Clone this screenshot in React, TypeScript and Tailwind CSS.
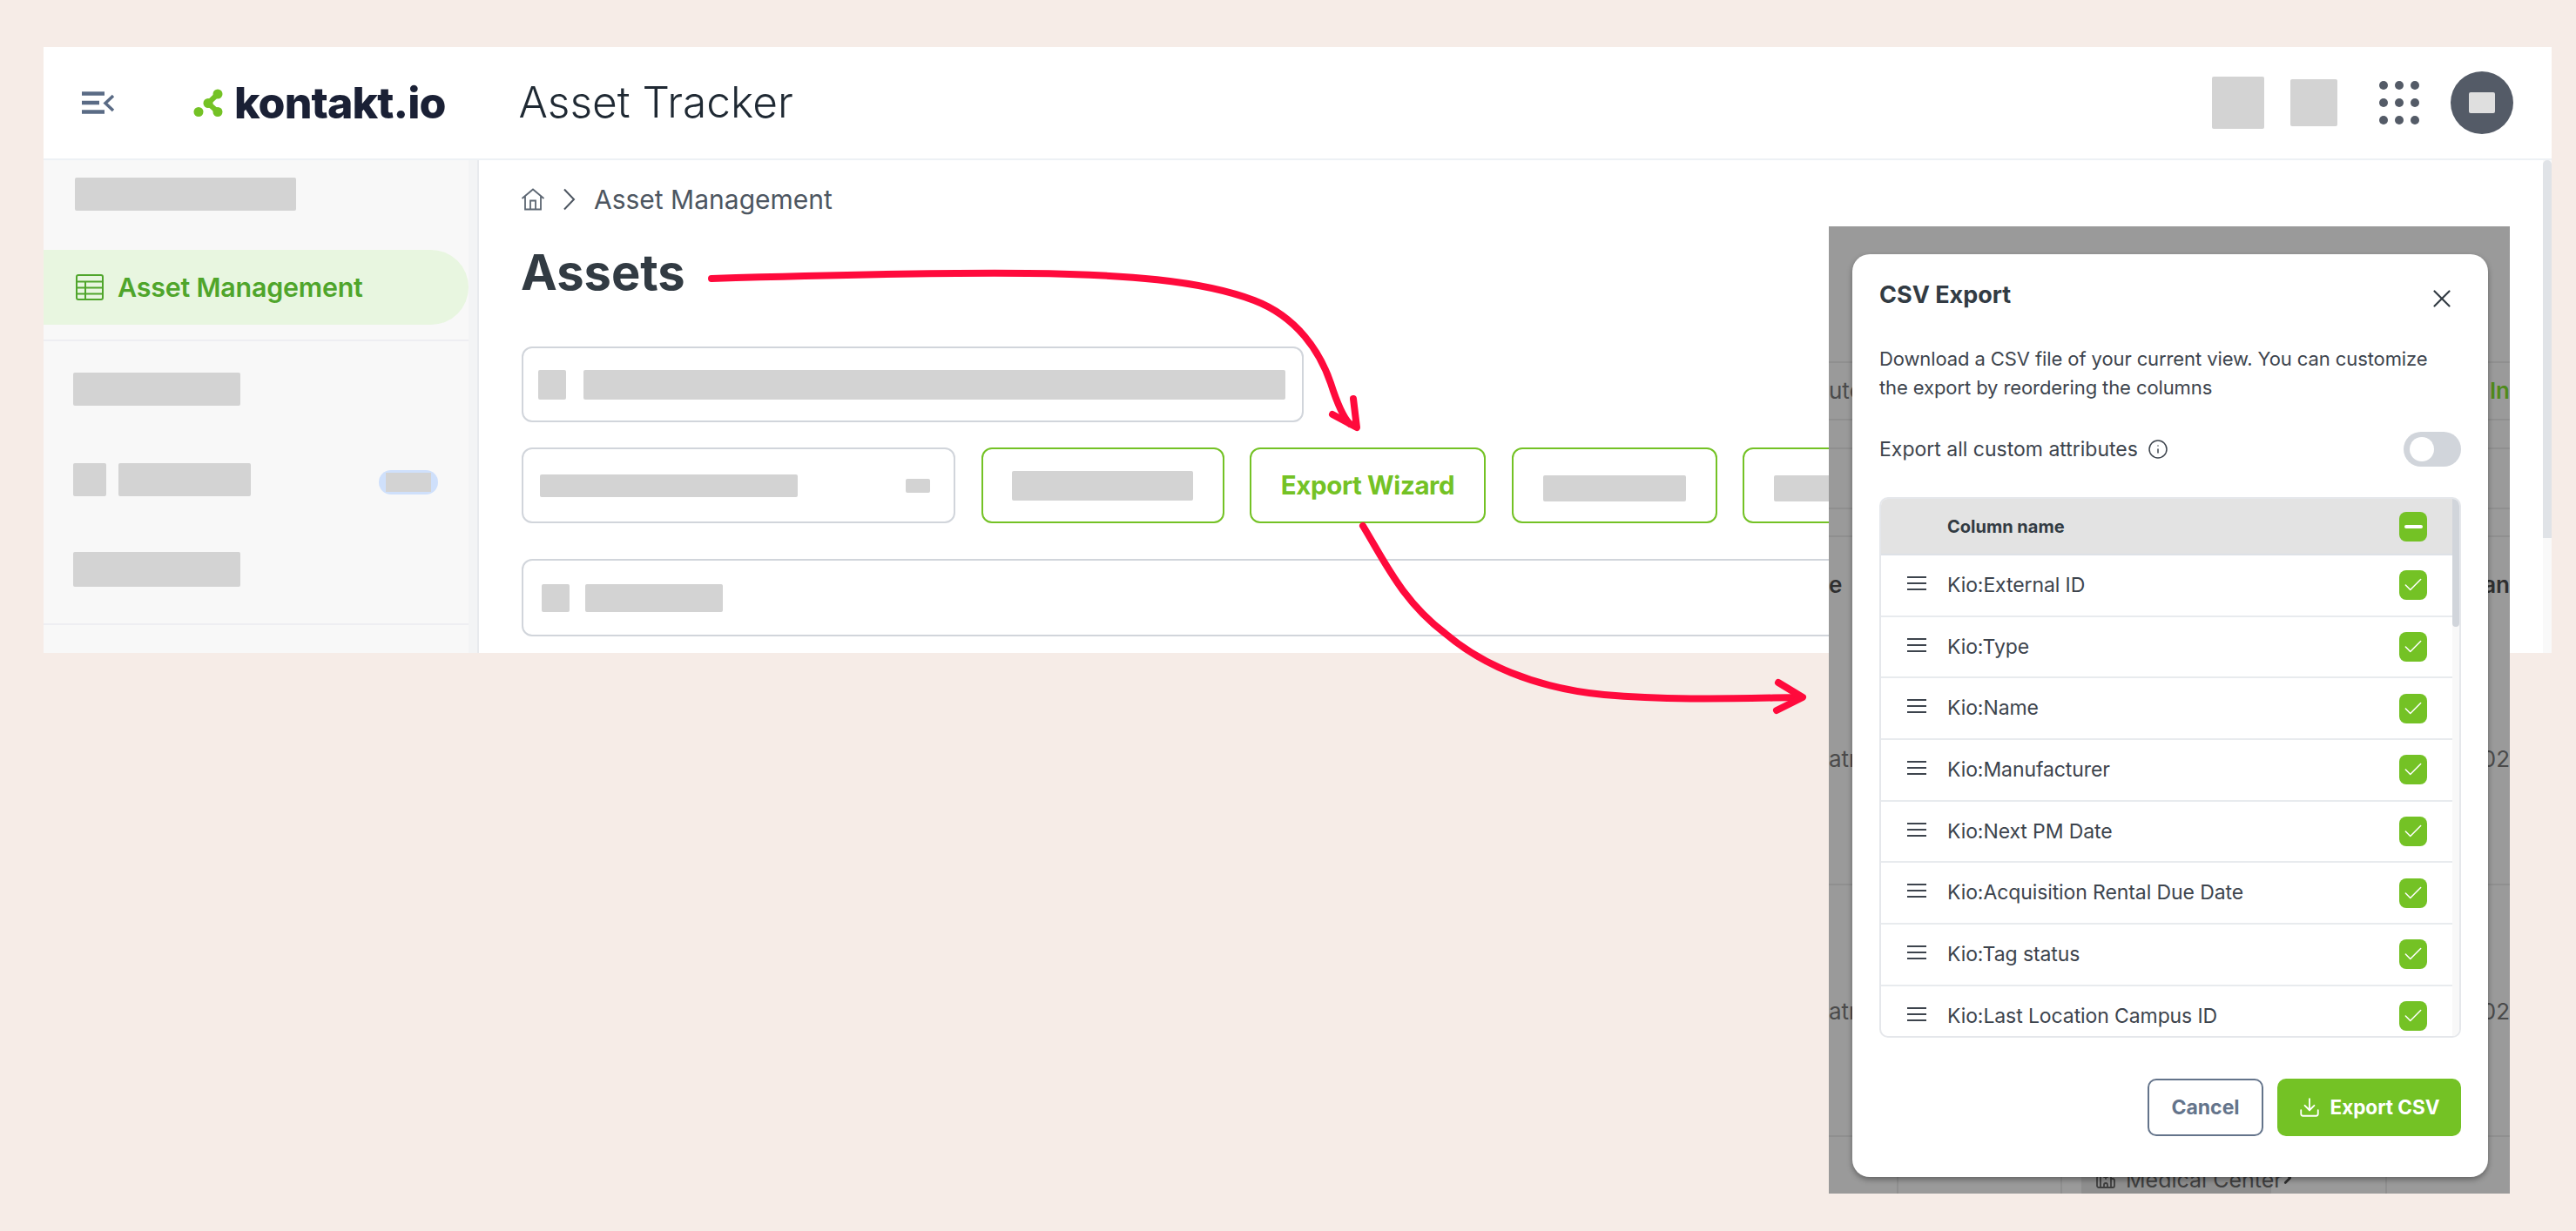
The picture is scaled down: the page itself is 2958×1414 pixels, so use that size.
import { ChevronRight, Hospital, Info, X, Check, Download } from "lucide-react";

const COLUMNS = [
  "Kio:External ID",
  "Kio:Type",
  "Kio:Name",
  "Kio:Manufacturer",
  "Kio:Next PM Date",
  "Kio:Acquisition Rental Due Date",
  "Kio:Tag status",
  "Kio:Last Location Campus ID",
];

function Gray({ className }: { className: string }) {
  return <div className={`rounded-[2px] bg-[#d3d3d3] shrink-0 ${className}`} />;
}

function MenuIcon() {
  return (
    <svg width="40" height="28" viewBox="0 0 40 28" className="shrink-0">
      <path d="M1 3.5h26M1 14h20M1 24.5h26" stroke="#5a6b85" strokeWidth="4.5" fill="none" />
      <path d="M37 6l-9 8.5 9 8.5" stroke="#5a6b85" strokeWidth="3.5" fill="none" />
    </svg>
  );
}

function Logo() {
  return (
    <div className="flex items-center">
      <svg width="36" height="36" viewBox="0 0 36 36" className="shrink-0">
        <path d="M17 18.5L28 8M17 18.5L28 28.5" stroke="#74c225" strokeWidth="6" fill="none" />
        <circle cx="6" cy="28.5" r="5.5" fill="#74c225" />
        <circle cx="17" cy="18.5" r="5.5" fill="#74c225" />
        <circle cx="28" cy="8" r="5.5" fill="#74c225" />
        <circle cx="28" cy="28.5" r="5.5" fill="#74c225" />
      </svg>
      <span className="ml-[11px] text-[50px] leading-none font-extrabold text-[#1a2035] tracking-[-0.9px]">
        kontakt.io
      </span>
    </div>
  );
}

function Header() {
  return (
    <header className="h-[130px] shrink-0 flex items-center bg-white border-b-2 border-[#edf1f5] pl-[43px]">
      <MenuIcon />
      <div className="ml-[89px]">
        <Logo />
      </div>
      <h1 className="ml-[84px] text-[49.6px] leading-none font-light text-[#1f2933]">Asset Tracker</h1>
      <div className="ml-auto flex items-center pr-[44px]">
        <Gray className="w-[60px] h-[60px]" />
        <Gray className="ml-[30px] w-[54px] h-[54px]" />
        <svg width="46" height="50" viewBox="0 0 46 50" className="ml-[48px] shrink-0">
          {[5, 25, 45].map((cy) =>
            [5, 23, 41].map((cx) => <circle key={`${cx}-${cy}`} cx={cx} cy={cy} r="5" fill="#545b67" />),
          )}
        </svg>
        <div className="ml-[36px] w-[72px] h-[72px] rounded-full bg-[#545b67] flex items-center justify-center">
          <div className="w-[30px] h-[24px] rounded-[2px] bg-[#dfdfdf]" />
        </div>
      </div>
    </header>
  );
}

function Sidebar() {
  return (
    <aside className="w-[500px] shrink-0 flex bg-[#f3f4f5] border-r-2 border-[#e8eaed]">
      <div className="w-[488px] bg-[#f8f8f8] pt-[20px]">
        <Gray className="ml-[36px] w-[254px] h-[38px]" />
        <div className="mt-[45px] h-[86px] rounded-r-[43px] bg-[#e8f6e0] flex items-center pl-[37px]">
          <svg width="32" height="30" viewBox="0 0 32 30" fill="none" stroke="#4fa52b" strokeWidth="2">
            <rect x="1" y="1" width="30" height="28" rx="2" />
            <path d="M1 8.5h30M1 15.5h30M1 22.5h30M11 8.5V29" />
          </svg>
          <span className="ml-[16px] text-[30.4px] font-semibold leading-none text-[#4fa52b] tracking-[-0.2px]">
            Asset Management
          </span>
        </div>
        <div className="mt-[17px] h-[2px] bg-[#eeeef2]" />
        <Gray className="mt-[36px] ml-[34px] w-[192px] h-[38px]" />
        <div className="mt-[66px] pl-[34px] flex items-center">
          <Gray className="w-[38px] h-[38px]" />
          <Gray className="ml-[14px] w-[152px] h-[38px]" />
          <div className="ml-[147px] mt-[6px] w-[68px] h-[28px] rounded-[14px] bg-[#cfe0fb] flex items-center justify-center">
            <div className="w-[52px] h-[22px] bg-[#d3d3d3]" />
          </div>
        </div>
        <Gray className="mt-[64px] ml-[34px] w-[192px] h-[40px]" />
        <div className="mt-[42px] h-[2px] bg-[#eeeef2]" />
      </div>
    </aside>
  );
}

function OutlineBox({ className, children }: { className: string; children?: React.ReactNode }) {
  return (
    <div className={`shrink-0 h-[87px] rounded-[12px] border-2 flex items-center ${className}`}>{children}</div>
  );
}

function Content() {
  return (
    <main className="flex-1 min-w-0 flex bg-white">
      <div className="flex-1 min-w-0 overflow-hidden pl-[49px] pt-[30px]">
        <nav className="h-[30px] -ml-[1px] flex items-center text-[#4d5661]">
          <svg width="28" height="26" viewBox="0 0 28 26" fill="none" stroke="#5c6672" strokeWidth="1.8" className="shrink-0">
            <path d="M1.5 12L14 1.5 26.5 12M5 9.5V24.5H23V9.5M11 24.5V14.5H17V24.5" />
          </svg>
          <svg width="15" height="26" viewBox="0 0 15 26" fill="none" stroke="#4d5661" strokeWidth="2" className="ml-[20px] shrink-0">
            <path d="M2 1.5L13 13 2 24.5" />
          </svg>
          <span className="ml-[21px] text-[30px] leading-none">Asset Management</span>
        </nav>
        <h2 className="mt-[44px] h-[50px] -ml-[1px] text-[56px] leading-[50px] font-bold text-[#323b43]">Assets</h2>
        <div className="mt-[60px]">
          <OutlineBox className="w-[898px] border-[#d1d5db] pl-[17px]">
            <Gray className="w-[32px] h-[34px]" />
            <Gray className="ml-[20px] w-[806px] h-[34px]" />
          </OutlineBox>
        </div>
        <div className="mt-[29px] flex gap-[29.5px] w-[1700px]">
          <OutlineBox className="w-[498px] border-[#d1d5db] pl-[19px]">
            <Gray className="w-[296px] h-[26px]" />
            <Gray className="ml-[124px] w-[28px] h-[16px]" />
          </OutlineBox>
          <OutlineBox className="w-[279px] border-[#74c225] justify-center">
            <Gray className="w-[208px] h-[34px]" />
          </OutlineBox>
          <OutlineBox className="w-[271px] border-[#74c225] justify-center">
            <span className="text-[29.5px] leading-none font-bold text-[#74c225] tracking-[-0.4px]">
              Export Wizard
            </span>
          </OutlineBox>
          <OutlineBox className="w-[236px] border-[#74c225] justify-center">
            <Gray className="w-[164px] h-[30px] mt-[6px]" />
          </OutlineBox>
          <OutlineBox className="w-[236px] border-[#74c225] justify-center">
            <Gray className="w-[164px] h-[30px] mt-[6px]" />
          </OutlineBox>
        </div>
        <div className="mt-[41px] w-[1700px] h-[89px] rounded-[12px] border-2 border-[#d1d5db] flex items-center pl-[21px]">
          <Gray className="w-[32px] h-[32px]" />
          <Gray className="ml-[18px] w-[158px] h-[32px]" />
        </div>
      </div>
      <div className="w-[10px] shrink-0 bg-[#f9f9f9]">
        <div className="h-[434px] rounded-t-[5px] bg-[#e0e3e7]" />
      </div>
    </main>
  );
}

function Backdrop() {
  return (
    <div className="absolute inset-0 flex flex-col overflow-hidden text-[26px] leading-none text-[#4a4a4a]">
      <div className="h-[157px] shrink-0 border-b-2 border-[#8f8f8f]" />
      <div className="h-[66px] shrink-0 flex items-center justify-between border-b-2 border-[#8f8f8f]">
        <span>ute</span>
        <span className="font-semibold text-[#4f8a1a]">In</span>
      </div>
      <div className="h-[33px] shrink-0 border-b-2 border-[#8f8f8f]" />
      <div className="h-[69px] shrink-0 border-b-2 border-[#8f8f8f]" />
      <div className="h-[32px] shrink-0 border-b-2 border-[#8f8f8f]" />
      <div className="h-[400px] shrink-0 border-b-2 border-[#8f8f8f]">
        <div className="mt-[42px] flex justify-between font-semibold text-[#2f2f2f]">
          <span className="whitespace-pre">e  ↑</span>
          <span>an</span>
        </div>
        <div className="mt-[174px] flex justify-between">
          <span>atri</span>
          <span>202</span>
        </div>
      </div>
      <div className="h-[289px] shrink-0 border-b-2 border-[#8f8f8f]">
        <div className="mt-[132px] flex justify-between">
          <span>atri</span>
          <span>202</span>
        </div>
      </div>
      <div className="flex-1 min-h-0 flex">
        <div className="w-[80px] shrink-0 border-r-2 border-[#8f8f8f]" />
        <div className="w-[188px] shrink-0 border-r-2 border-[#8f8f8f]" />
        <div className="w-[373px] shrink-0 border-r-2 border-[#8f8f8f] pl-[22px] flex items-start">
          <div className="mt-[24px] h-[60px] w-[218px] rounded-[22px] bg-[#8e8e8e] flex items-start pl-[16px] pt-[13px] gap-[11px] text-[#3f3f3f]">
            <Hospital size={24} strokeWidth={1.8} className="shrink-0" />
            <span className="whitespace-nowrap text-[25px]">Medical Center</span>
          </div>
          <ChevronRight size={22} strokeWidth={3} className="ml-[8px] mt-[36px] text-[#2f2f2f] shrink-0" />
        </div>
      </div>
    </div>
  );
}

function CheckBox({ dash }: { dash?: boolean }) {
  return (
    <div className="w-[32px] h-[34px] rounded-[8px] bg-[#74c225] flex items-center justify-center shrink-0">
      {dash ? (
        <div className="w-[21px] h-[4px] rounded-[2px] bg-white" />
      ) : (
        <Check size={26} strokeWidth={1.4} className="text-white" />
      )}
    </div>
  );
}

function ColumnTable() {
  return (
    <div className="h-[621px] rounded-[10px] border-2 border-[#e5e7eb] overflow-hidden flex">
      <div className="flex-1 min-w-0">
        <div className="h-[65px] bg-[#e3e3e3] flex items-center pl-[76px] pr-[29px] justify-between border-b-2 border-[#dde1e6]">
          <span className="text-[20px] font-bold text-[#323b43] leading-none">Column name</span>
          <CheckBox dash />
        </div>
        {COLUMNS.map((name) => (
          <div key={name} className="h-[70.7px] flex items-center border-b-2 border-[#e8ebee] pl-[30px] pr-[29px]">
            <div className="w-[22px] h-[16px] -mt-[5px] flex flex-col justify-between shrink-0">
              <div className="h-[2px] bg-[#3d444d]" />
              <div className="h-[2px] bg-[#3d444d]" />
              <div className="h-[2px] bg-[#3d444d]" />
            </div>
            <span className="ml-[24px] text-[23px] leading-none text-[#3d444d] whitespace-nowrap tracking-[-0.1px]">{name}</span>
            <div className="ml-auto">
              <CheckBox />
            </div>
          </div>
        ))}
      </div>
      <div className="w-[8px] shrink-0 bg-[#f8f8f8]">
        <div className="h-[147px] rounded-b-[4px] bg-[#d1d5db]" />
      </div>
    </div>
  );
}

function ExportModal() {
  return (
    <div className="absolute left-[2100px] top-[260px] w-[782px] h-[1111px] bg-[#9a9a9a]">
      <Backdrop />
      <div className="absolute left-[27px] top-[32px] w-[730px] h-[1060px] rounded-[20px] bg-white shadow-[0_3px_6px_rgba(0,0,0,0.35)] px-[31px] pt-[23px]">
        <div className="h-[46px] flex items-center justify-between">
          <h3 className="text-[27px] font-bold leading-none text-[#323b43]">CSV Export</h3>
          <X size={34} strokeWidth={1.5} className="mr-[5px] mt-[10px] text-[#323b43]" />
        </div>
        <p className="mt-[35px] w-[660px] text-[22px] leading-[33px] tracking-[-0.1px] text-[#3d444d]">
          Download a CSV file of your current view. You can customize the export by reordering the columns
        </p>
        <div className="mt-[34px] h-[40px] flex items-center">
          <span className="text-[23px] leading-none text-[#3d444d]">Export all custom attributes</span>
          <Info size={24} strokeWidth={1.5} className="ml-[11px] text-[#3d444d]" />
          <div className="ml-auto w-[66px] h-[40px] rounded-[20px] bg-[#d1d5db] flex items-center pl-[7px]">
            <div className="w-[28px] h-[28px] rounded-full bg-white" />
          </div>
        </div>
        <div className="mt-[35px]">
          <ColumnTable />
        </div>
        <div className="mt-[47px] flex justify-end gap-[16px]">
          <div className="w-[133px] h-[66px] rounded-[10px] border-2 border-[#64748b] flex items-center justify-center text-[23px] font-bold text-[#64748b]">
            Cancel
          </div>
          <div className="w-[211px] h-[66px] rounded-[10px] bg-[#74c225] flex items-center justify-center gap-[10px] text-[22.5px] font-bold text-white">
            <Download size={26} strokeWidth={1.7} />
            Export CSV
          </div>
        </div>
      </div>
    </div>
  );
}

function Arrows() {
  return (
    <svg className="absolute left-0 top-0 pointer-events-none" width="2958" height="1414" viewBox="0 0 2958 1414" fill="none">
      <g stroke="#ff0a3c" strokeWidth="8" strokeLinecap="round" strokeLinejoin="round">
        <path d="M817 320C950 316 1080 313 1180 314C1290 315 1380 322 1440 345C1490 364 1516 405 1528 440C1536 465 1543 480 1550 487" />
        <path d="M1530 476L1558 491L1554 458" />
        <path d="M1565 604C1590 645 1610 690 1660 728C1700 762 1760 790 1842 798C1920 805 2000 802 2068 801" />
        <path d="M2042 784L2070 801L2040 816" />
      </g>
    </svg>
  );
}

export default function App() {
  return (
    <div className="relative w-[2958px] h-[1414px] overflow-hidden bg-[#f6ece7] pt-[54px] pl-[50px] font-['Inter',sans-serif]">
      <div className="w-[2880px] h-[696px] overflow-hidden flex flex-col bg-white">
        <Header />
        <div className="flex-1 min-h-0 flex">
          <Sidebar />
          <Content />
        </div>
      </div>
      <Arrows />
      <ExportModal />
    </div>
  );
}
